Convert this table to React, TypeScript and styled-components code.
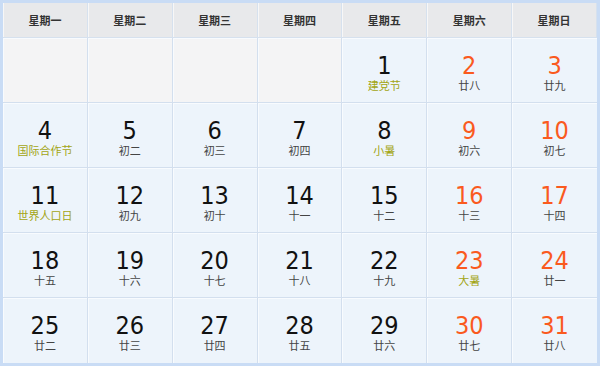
import React from 'react';
import styled, { createGlobalStyle } from 'styled-components';

const GlobalStyle = createGlobalStyle`
  html, body {
    margin: 0;
    padding: 0;
    background: #fff;
  }
  body {
    font-family: "Noto Sans CJK SC", "DejaVu Sans", sans-serif;
  }
`;

const Calendar = styled.div`
  width: 600px;
  height: 366px;
  box-sizing: border-box;
  border: 3px solid #c9dcf5;
  display: grid;
  grid-template-columns: repeat(7, 1fr);
  grid-template-rows: 35px repeat(5, 65px);
  background: #eef5fc;
`;

const HeadCell = styled.div`
  background: #e8e9eb;
  border-right: 1px solid #d6e1ee;
  border-bottom: 1px solid #d6e1ee;
  box-shadow: inset 1px 0 0 #f7f7f7;
  display: flex;
  align-items: center;
  justify-content: center;
  font-family: "Noto Sans CJK SC", sans-serif;
  font-size: 11px;
  font-weight: 700;
  color: #333;
  &:last-child {
    border-right: none;
  }
`;

const DayCell = styled.div<{ $empty?: boolean; $lastCol?: boolean; $lastRow?: boolean }>`
  background: ${p => (p.$empty ? '#f4f4f5' : '#edf4fb')};
  border-right: ${p => (p.$lastCol ? 'none' : '1px solid #d3dfee')};
  border-bottom: ${p => (p.$lastRow ? 'none' : '1px solid #d3dfee')};
  box-shadow: inset 1px 1px 0 #f8fbfe;
  display: flex;
  flex-direction: column;
  align-items: center;
  padding-top: 15px;
  box-sizing: border-box;
`;

const DayNum = styled.div<{ $weekend?: boolean }>`
  font-family: "DejaVu Sans Condensed", "DejaVu Sans", sans-serif;
  font-stretch: condensed;
  font-size: 25px;
  line-height: 26px;
  color: ${p => (p.$weekend ? '#fa5a1e' : '#111')};
`;

const Lunar = styled.div<{ $festival?: boolean }>`
  font-family: "Noto Sans CJK SC", sans-serif;
  font-size: 11px;
  line-height: 13px;
  color: ${p => (p.$festival ? '#a3a514' : '#444')};
`;

const weekdays = ['星期一', '星期二', '星期三', '星期四', '星期五', '星期六', '星期日'];

type Day = { n: number; lunar: string; festival?: boolean } | null;

const lunar: [string, boolean?][] = [
  ['建党节', true], ['廿八'], ['廿九'], ['国际合作节', true], ['初二'], ['初三'], ['初四'],
  ['小暑', true], ['初六'], ['初七'], ['世界人口日', true], ['初九'], ['初十'], ['十一'],
  ['十二'], ['十三'], ['十四'], ['十五'], ['十六'], ['十七'], ['十八'],
  ['十九'], ['大暑', true], ['廿一'], ['廿二'], ['廿三'], ['廿四'], ['廿五'],
  ['廿六'], ['廿七'], ['廿八'],
];

const days: Day[] = [
  null, null, null, null,
  ...lunar.map(([text, festival], i) => ({ n: i + 1, lunar: text, festival })),
];

const App: React.FC = () => (
  <>
    <GlobalStyle />
    <Calendar>
      {weekdays.map(w => (
        <HeadCell key={w}>{w}</HeadCell>
      ))}
      {days.map((d, i) => {
        const col = i % 7;
        const row = Math.floor(i / 7);
        return (
          <DayCell key={i} $empty={!d} $lastCol={col === 6} $lastRow={row === 4}>
            {d && (
              <>
                <DayNum $weekend={col >= 5}>{d.n}</DayNum>
                <Lunar $festival={d.festival}>{d.lunar}</Lunar>
              </>
            )}
          </DayCell>
        );
      })}
    </Calendar>
  </>
);

export default App;
